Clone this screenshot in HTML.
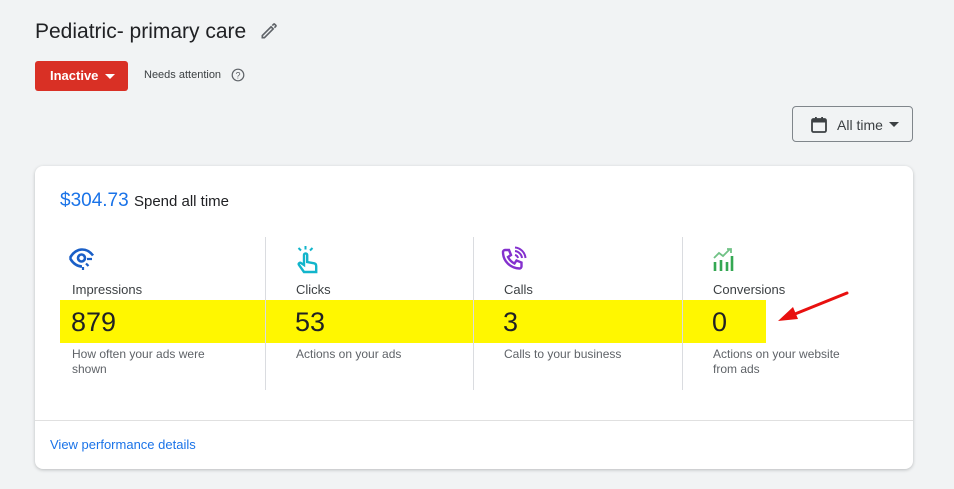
<!DOCTYPE html>
<html><head><style>
body{margin:0;width:954px;height:489px;background:#f1f3f4;font-family:"Liberation Sans",sans-serif;position:relative;overflow:hidden;color:#202124}
.a{position:absolute}
.card{left:35px;top:166px;width:878px;height:303px;background:#fff;border-radius:8px;box-shadow:0 1px 3px rgba(60,64,67,.3)}
.lab{font-size:13px;color:#3c4043}
.num{font-size:27px;color:#202124}
.desc{font-size:12px;color:#5f6368;line-height:15px}
.div{width:1px;background:#dadce0;top:237px;height:153px}
</style></head><body>
<div class="a" style="left:35px;top:20px;font-size:21px;color:#202124">Pediatric- primary care</div>
<svg class="a" style="left:259px;top:21px" width="20" height="20" viewBox="0 0 24 24"><path d="M4 17.5V20h2.5L17 9.5 14.5 7zM14.5 7l2.5 2.5M16 5.5l1.5-1.5a1 1 0 011.4 0l1.1 1.1a1 1 0 010 1.4L18.5 8" fill="none" stroke="#5f6368" stroke-width="2"/></svg>
<div class="a" style="left:35px;top:61px;width:93px;height:30px;background:#d93025;border-radius:3px;color:#fff;font-size:13px;font-weight:bold;line-height:30px;box-sizing:border-box;padding-left:15px">Inactive <span style="display:inline-block;width:0;height:0;border-left:5px solid transparent;border-right:5px solid transparent;border-top:5px solid #fff;vertical-align:middle;margin-left:3px"></span></div>
<div class="a" style="left:144px;top:69px;font-size:11px;color:#3c4043">Needs attention</div>
<svg class="a" style="left:231px;top:68px" width="14" height="14" viewBox="0 0 14 14"><circle cx="7" cy="7" r="5.8" fill="none" stroke="#5f6368" stroke-width="1.2"/><text x="7" y="10.3" font-size="9" text-anchor="middle" fill="#5f6368" font-family="Liberation Sans">?</text></svg>
<div class="a" style="left:792px;top:106px;width:121px;height:36px;border:1px solid #80868b;border-radius:4px;box-sizing:border-box;background:#f1f3f4"></div>
<svg class="a" style="left:810px;top:116px" width="18" height="18" viewBox="0 0 18 18"><rect x="2" y="3" width="14" height="13" rx="1.5" fill="none" stroke="#3c4043" stroke-width="1.8"/><rect x="2" y="3" width="14" height="3.5" fill="#3c4043"/><rect x="5" y="1" width="1.8" height="3" fill="#3c4043"/><rect x="11.2" y="1" width="1.8" height="3" fill="#3c4043"/></svg>
<div class="a" style="left:837px;top:117px;font-size:14px;color:#3c4043">All time</div>
<div class="a" style="left:889px;top:122px;width:0;height:0;border-left:5px solid transparent;border-right:5px solid transparent;border-top:5px solid #3c4043"></div>
<div class="a card"></div>
<div class="a" style="left:60px;top:190px;font-size:19px;color:#1a73e8">$304.73 <span style="font-size:15px;color:#202124">Spend all time</span></div>
<div class="a" style="left:60px;top:300px;width:706px;height:43px;background:#fff700"></div>
<div class="a div" style="left:265px"></div><div class="a div" style="left:473px"></div><div class="a div" style="left:682px"></div>
<svg class="a" style="left:68px;top:246px" width="30" height="28" viewBox="0 0 30 28"><path d="M2 12C5 6 10 3.5 14 3.5s8 2 11 6M2 12c3 6 8 8.5 12 8.5" fill="none" stroke="#1a5fc7" stroke-width="2.6"/><circle cx="13.5" cy="12" r="3.5" fill="none" stroke="#1a5fc7" stroke-width="2.6"/><path d="M19 13h5M18 17.5l2.5 2.5M15 21v3" stroke="#1a5fc7" stroke-width="2.2"/></svg>
<svg class="a" style="left:295px;top:244px" width="26" height="31" viewBox="0 0 26 31"><path d="M9 28l-5-7c-1-1.5 1-3 2.3-1.8L9 21V11a1.6 1.6 0 013.2 0v7l7 1.3c1.5.3 2 1.5 2 2.8V28z" fill="none" stroke="#12b5cb" stroke-width="2.4"/><path d="M10.5 2v3.5M3.5 4l2.5 2.5M17.5 4L15 6.5" stroke="#12b5cb" stroke-width="2"/></svg>
<svg class="a" style="left:500px;top:246px" width="28" height="28" viewBox="0 0 28 28"><path d="M5 4h4l2 5-3 2c1.5 3 3.5 5 6.5 6.5l2-3 5 2v4c0 1-1 2-2 2C10 22 3 15 3 6c0-1 1-2 2-2z" fill="none" stroke="#8430ce" stroke-width="2.4"/><path d="M15 9a4 4 0 013 3M15 5a8 8 0 017 7M15 1.5a11.5 11.5 0 0110.5 10.5" fill="none" stroke="#8430ce" stroke-width="2"/></svg>
<svg class="a" style="left:712px;top:246px" width="24" height="27" viewBox="0 0 24 27"><path d="M2 12l5-5 4 3 7-7M15 3h4v4" fill="none" stroke="#34a853" stroke-width="1.8" opacity=".7"/><path d="M3 16v9M9 14v11M15 16v9M20 10v15" stroke="#34a853" stroke-width="2.6"/></svg>
<div class="a lab" style="left:72px;top:282px">Impressions</div>
<div class="a lab" style="left:296px;top:282px">Clicks</div>
<div class="a lab" style="left:504px;top:282px">Calls</div>
<div class="a lab" style="left:713px;top:282px">Conversions</div>
<div class="a num" style="left:71px;top:307px">879</div>
<div class="a num" style="left:295px;top:307px">53</div>
<div class="a num" style="left:503px;top:307px">3</div>
<div class="a num" style="left:712px;top:307px">0</div>
<div class="a desc" style="left:72px;top:347px;width:150px">How often your ads were shown</div>
<div class="a desc" style="left:296px;top:347px">Actions on your ads</div>
<div class="a desc" style="left:504px;top:347px">Calls to your business</div>
<div class="a desc" style="left:713px;top:347px;width:140px">Actions on your website from ads</div>
<svg class="a" style="left:770px;top:288px" width="82" height="40" viewBox="0 0 82 40"><path d="M77 5L20 28" stroke="#e8100f" stroke-width="3" stroke-linecap="round"/><path d="M8 33l15-14 5 12z" fill="#e8100f"/></svg>
<div class="a" style="left:35px;top:420px;width:878px;height:1px;background:#e0e0e0"></div>
<div class="a" style="left:50px;top:437px;font-size:13px;color:#1a73e8">View performance details</div>
</body></html>
